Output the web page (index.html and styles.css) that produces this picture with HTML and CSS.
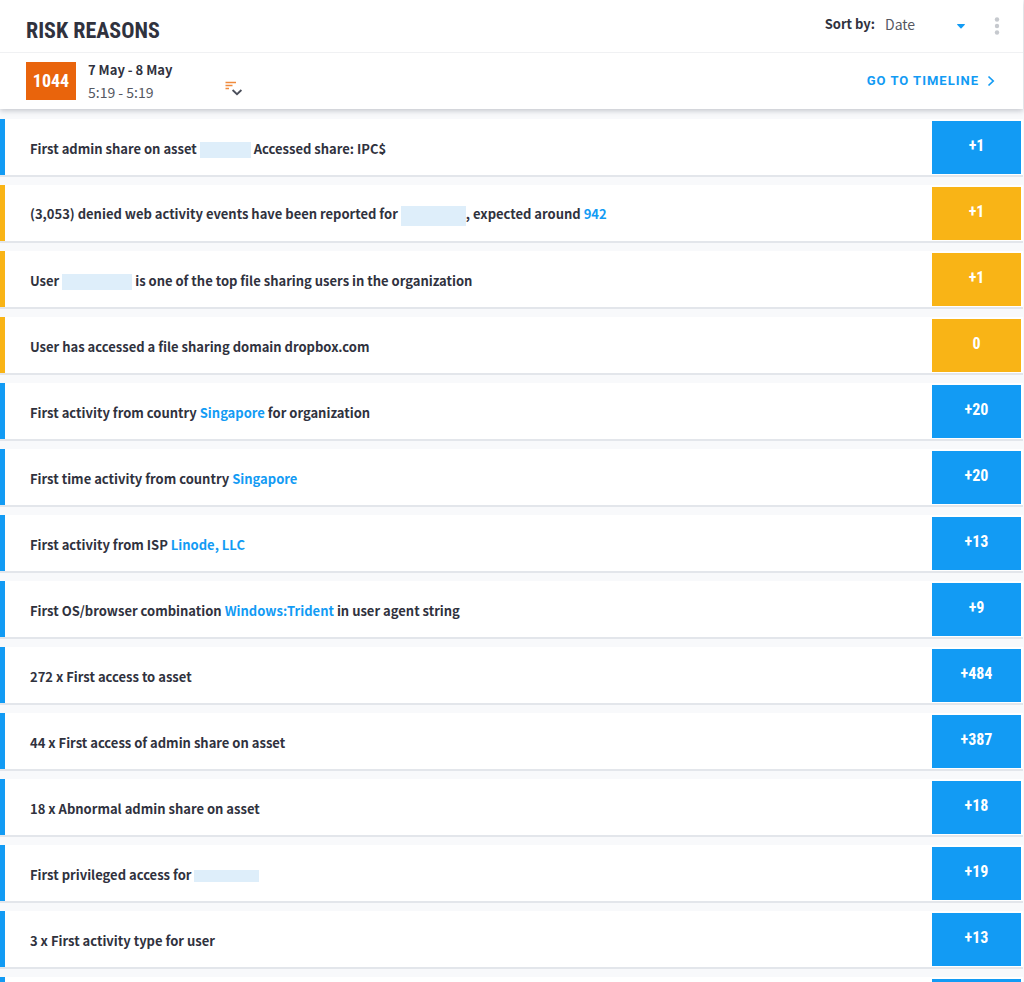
FILE: index.html
```
<!DOCTYPE html>
<html lang="en">
<head>
    <meta charset="UTF-8">
    <meta name="viewport" content="width=device-width, initial-scale=1.0">
    <title>Risk Reasons</title>
    <link rel="stylesheet" href="styles.css">
</head>
<body>
    <div class="panel">
        <header class="panel-header">
            <div class="title-bar">
                <h1>RISK REASONS</h1>
                <div class="sort">
                    <label for="sortBy">Sort by:</label>
                    <div class="select-wrap">
                        <select id="sortBy">
                            <option>Date</option>
                            <option>Score</option>
                        </select>
                        <svg class="caret" width="8" height="5" viewBox="0 0 8 5"><path d="M0 0.5Q0 0 0.6 0H7.4Q8 0 8 0.5L4.5 4.3Q4 4.8 3.5 4.3Z" fill="#129bf4"/></svg>
                    </div>
                </div>
                <button class="menu-button" aria-label="More options">
                    <svg width="6" height="18" viewBox="0 0 6 18" fill="#c6c9ce"><circle cx="3" cy="2.5" r="2.2"/><circle cx="3" cy="9" r="2.2"/><circle cx="3" cy="15.5" r="2.2"/></svg>
                </button>
            </div>
            <div class="session-bar">
                <div class="score">1044</div>
                <div class="session-time">
                    <div class="dates">7 May - 8 May</div>
                    <div class="hours">5:19 - 5:19</div>
                </div>
                <button class="expand-button" aria-label="Show session details">
                    <svg width="18" height="16" viewBox="0 0 18 16" fill="none"><path d="M0.5 1.5H11M0.5 4.5H7.5M0.5 7.5H4" stroke="#f08a3c" stroke-width="1.6"/><path d="M7.6 9L12 13.2L16.4 9" stroke="#4a4e5a" stroke-width="1.8"/></svg>
                </button>
                <a class="timeline-link" href="#timeline">GO TO TIMELINE
                    <svg width="8" height="12" viewBox="0 0 8 12" fill="none"><path d="M1.5 1.5L6.2 6L1.5 10.5" stroke="#129bf4" stroke-width="1.7"/></svg>
                </a>
            </div>
        </header>

        <ul class="reasons">
            <li class="reason">
                <p>First admin share on asset <span class="redacted short"></span> Accessed share: IPC$</p>
                <span class="points">+1</span>
            </li>
            <li class="reason warning">
                <p>(3,053) denied web activity events have been reported for <span class="redacted tall"></span>, expected around <a href="#events">942</a></p>
                <span class="points">+1</span>
            </li>
            <li class="reason warning">
                <p>User <span class="redacted wide"></span> is one of the top file sharing users in the organization</p>
                <span class="points">+1</span>
            </li>
            <li class="reason warning">
                <p>User has accessed a file sharing domain dropbox.com</p>
                <span class="points">0</span>
            </li>
            <li class="reason">
                <p>First activity from country <a href="#singapore">Singapore</a> for organization</p>
                <span class="points">+20</span>
            </li>
            <li class="reason">
                <p>First time activity from country <a href="#singapore">Singapore</a></p>
                <span class="points">+20</span>
            </li>
            <li class="reason">
                <p>First activity from ISP <a href="#linode">Linode, LLC</a></p>
                <span class="points">+13</span>
            </li>
            <li class="reason">
                <p>First OS/browser combination <a href="#trident">Windows:Trident</a> in user agent string</p>
                <span class="points">+9</span>
            </li>
            <li class="reason">
                <p>272 x First access to asset</p>
                <span class="points">+484</span>
            </li>
            <li class="reason">
                <p>44 x First access of admin share on asset</p>
                <span class="points">+387</span>
            </li>
            <li class="reason">
                <p>18 x Abnormal admin share on asset</p>
                <span class="points">+18</span>
            </li>
            <li class="reason">
                <p>First privileged access for <span class="redacted low"></span></p>
                <span class="points">+19</span>
            </li>
            <li class="reason">
                <p>3 x First activity type for user</p>
                <span class="points">+13</span>
            </li>
            <li class="reason">
                <p></p>
                <span class="points"></span>
            </li>
        </ul>
    </div>
</body>
</html>
```
FILE: styles.css
```
* {
    box-sizing: border-box;
}

body {
    margin: 0;
    font-family: "Noto Sans CJK SC", "Noto Sans", sans-serif;
    font-size: 13px;
    line-height: 20px;
    color: #30323e;
    background: #f8f9fb;
}

button {
    padding: 0;
    border: none;
    background: none;
    cursor: pointer;
}

svg {
    display: block;
}

a {
    color: #129bf4;
    text-decoration: none;
}

.panel {
    height: 100vh;
    overflow: hidden;
    padding-right: 1px;
}

/* Header */
.panel-header {
    background: #fff;
    box-shadow: 0 2px 5px rgba(50, 60, 80, 0.25);
}

.title-bar {
    display: flex;
    align-items: center;
    height: 53px;
    padding: 0 23px 0 26px;
    border-bottom: 1px solid #f0f1f3;
}

h1 {
    margin: 0;
    padding-top: 10px;
    font-family: "Roboto Condensed", "Noto Sans CJK SC", sans-serif;
    font-size: 22px;
    line-height: 28px;
    font-weight: bold;
}

.sort {
    display: flex;
    align-items: center;
    gap: 10px;
    margin-left: auto;
    padding-bottom: 4px;
}

.sort label {
    font-weight: bold;
}

.select-wrap {
    display: flex;
    align-items: center;
    position: relative;
    width: 81px;
}

.select-wrap select {
    width: 100%;
    padding: 0;
    border: none;
    appearance: none;
    background: none;
    font: inherit;
    font-size: 14px;
    color: #555862;
}

.caret {
    position: absolute;
    right: 1px;
    bottom: 5px;
    pointer-events: none;
}

.menu-button {
    margin-left: 28px;
}

.session-bar {
    display: flex;
    align-items: center;
    height: 56px;
    padding: 0 28px 0 26px;
}

.score {
    width: 50px;
    background: #e9640c;
    color: #fff;
    font-family: "Roboto Condensed", "Noto Sans CJK SC", sans-serif;
    font-size: 18px;
    line-height: 38px;
    font-weight: bold;
    text-align: center;
}

.session-time {
    width: 136px;
    padding-left: 12px;
    line-height: 22px;
}

.dates {
    font-weight: bold;
}

.hours {
    font-size: 14px;
    color: #555862;
}

.expand-button {
    margin: 16px 0 0 13px;
}

.timeline-link {
    display: flex;
    align-items: center;
    gap: 8px;
    margin-left: auto;
    font-family: Roboto, sans-serif;
    font-weight: bold;
    letter-spacing: 1px;
}

/* Reasons */
.reasons {
    display: grid;
    gap: 8px;
    margin: 0;
    padding: 10px 0 0;
    list-style: none;
}

.reason {
    display: flex;
    align-items: center;
    height: 58px;
    padding: 0 2px 0 25px;
    border-bottom: 2px solid #e3e6eb;
    background: linear-gradient(to right, #129bf4 5px, #fff 5px);
}

.reason.warning {
    background: linear-gradient(to right, #f9b416 5px, #fff 5px);
}

.reason p {
    flex: 1;
    margin: 0;
    padding: 4px 0 0 5px;
    font-weight: bold;
}

.points {
    width: 89px;
    height: 53px;
    background: #129bf4;
    color: #fff;
    font-family: "Roboto Condensed", Roboto, sans-serif;
    font-size: 16px;
    line-height: 50px;
    font-weight: bold;
    text-align: center;
}

.warning .points {
    background: #f9b416;
}

.redacted {
    display: inline-block;
    width: 65px;
    height: 16px;
    vertical-align: middle;
    background: #deeefa;
}

.redacted.short {
    width: 51px;
}

.redacted.tall {
    height: 20px;
}

.redacted.wide {
    width: 70px;
}

.redacted.low {
    height: 12px;
}
```
